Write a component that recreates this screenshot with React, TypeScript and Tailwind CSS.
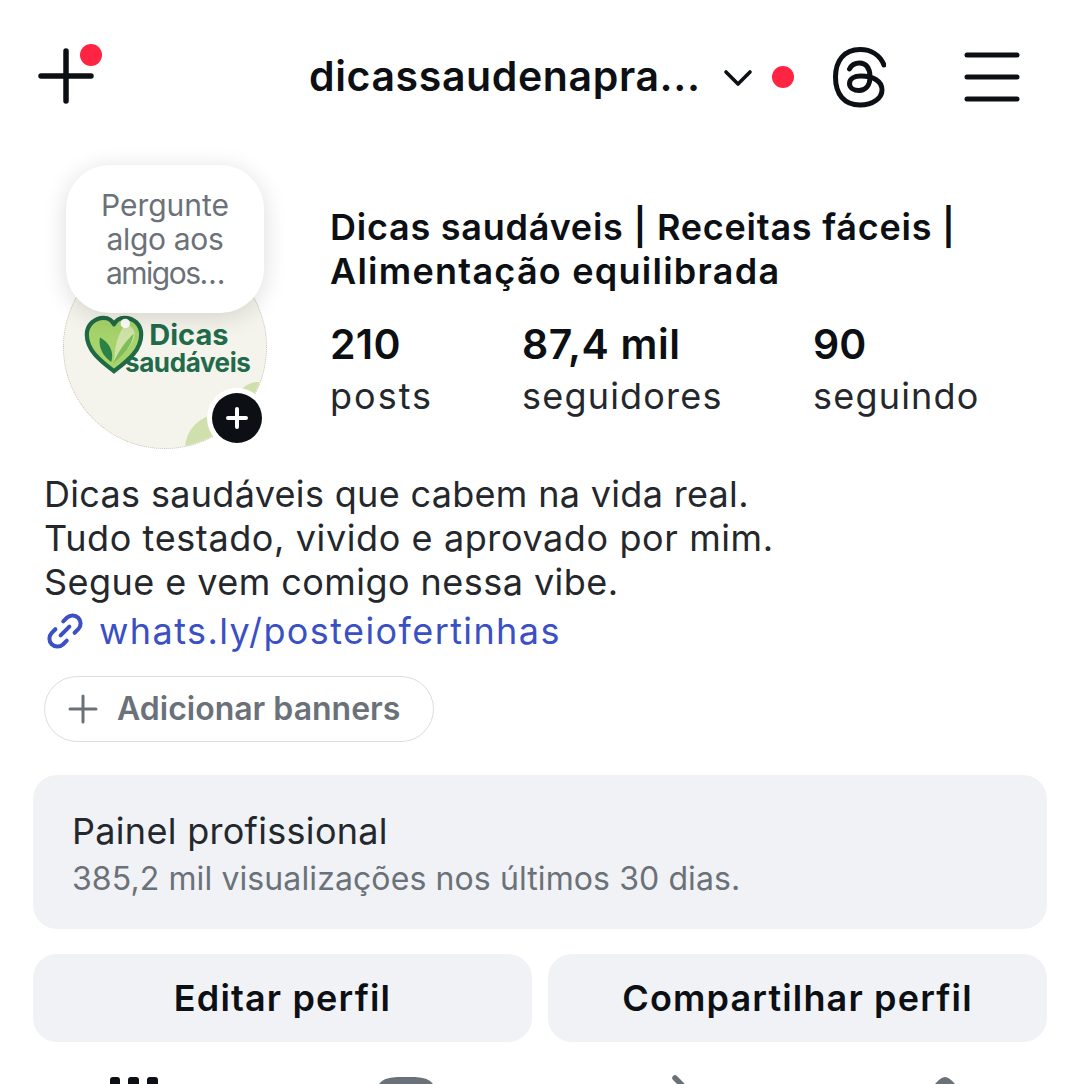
import React from "react";

const ink = "#0c1014";

function Stat({ value, label, className, valueTrack, labelTrack }: { value: string; label: string; className: string; valueTrack: string; labelTrack: string }) {
  return (
    <div className={`flex flex-col ${className}`}>
      <span className={`text-[41px] leading-[52px] font-semibold text-[#0c1014] ${valueTrack}`}>{value}</span>
      <span className={`text-[36px] leading-[52px] text-[#24282c] ${labelTrack}`}>{label}</span>
    </div>
  );
}

function Threads() {
  return (
    <svg width="53" height="61" viewBox="0 0 53 61" fill="none" stroke={ink} strokeWidth="5" strokeLinecap="round">
      <path d="M51 18C47 8 38 2.5 27 2.5C11 2.5 2.5 14 2.5 30C2.5 47 11 58 27 58C40 58 49 51 49 43C49 34 40 29 28 29C21 29 16.5 32 16.5 36.5C16.5 41 21 43.5 26 43.5C33 43.5 37 38 37 30C37 21 33 16 26.5 16C22 16 18.5 18 16.5 22" strokeLinejoin="round" />
    </svg>
  );
}

function Logo() {
  return (
    <div className="flex items-start">
      <svg width="60" height="60" viewBox="0 0 64 64" className="shrink-0">
        <path d="M32 60C18 49 3 38 3 21C3 10 12 3 21 3C26 3 30 6 32 10C34 6 38 3 43 3C53 3 61 10 61 21C61 38 46 49 32 60Z" fill="#a6d36b" stroke="#1f6a45" strokeWidth="4.5" strokeLinejoin="round" />
        <path d="M32 50C44 40 53 32 54 20C54 15 50 12 46 10C38 14 33 30 32 50Z" fill="#cfe3a8" />
        <path d="M31 52C36 40 44 28 53 20C51 34 42 42 31 52Z" fill="#7fbd5a" />
        <path d="M29 50C20 44 15 34 17 24C25 28 33 38 29 50Z" fill="#2b8146" />
        <circle cx="44" cy="9" r="5" fill="#ffffff" />
      </svg>
      <div className="flex flex-col items-end -ml-[19px] mt-[5px]">
        <span className="text-[29px] leading-[29px] font-bold text-[#216a4a] mr-[22px]">Dicas</span>
        <span className="text-[26px] leading-[27px] font-bold text-[#216a4a] tracking-[-0.4px]">saudáveis</span>
      </div>
    </div>
  );
}

function Avatar() {
  return (
    <div className="relative w-[204px] h-[284px] shrink-0">
      <div className="absolute left-0 bottom-0 w-[204px] h-[204px] rounded-full bg-[#f5f4ec] border border-dotted border-[#c4c4b8] overflow-hidden">
        <div className="absolute left-[121px] top-[168px] w-[70px] h-[70px] rounded-full bg-[#cfe0ac]" />
        <div className="absolute left-[172px] top-[136px] w-[44px] h-[44px] rounded-full bg-[#cfe0ac]" />
        <div className="absolute left-[20px] top-[69px]">
          <Logo />
        </div>
      </div>
      <div className="absolute left-[3px] top-0 w-[198px] h-[148px] rounded-[44px] bg-white shadow-[0_4px_24px_rgba(0,0,0,0.14)] flex flex-col items-center justify-center text-[#6b7178] text-[30px] leading-[34px]">
        <span>Pergunte</span>
        <span className="tracking-[-0.3px]">algo aos</span>
        <span className="tracking-[-1.5px]">amigos…</span>
      </div>
      <div className="absolute left-[144px] top-[223px] w-[60px] h-[60px] rounded-full bg-white flex items-center justify-center">
        <div className="w-[50px] h-[50px] rounded-full bg-[#0c1014] flex items-center justify-center">
          <svg width="24" height="24" viewBox="0 0 24 24" stroke="#fff" strokeWidth="4" strokeLinecap="round">
            <path d="M12 3V21M3 12H21" />
          </svg>
        </div>
      </div>
    </div>
  );
}

export default function App() {
  return (
    <div className="w-[1080px] h-[1084px] overflow-hidden bg-white font-['Inter','Noto_Sans',sans-serif]">
      <header className="h-[165px] pt-[44px] flex items-start">
        <div className="relative w-[309px] h-[60px] shrink-0">
          <svg className="absolute left-[38px] top-[4px]" width="56" height="56" viewBox="0 0 56 56" stroke={ink} strokeWidth="5.5" strokeLinecap="round">
            <path d="M28 3V53M3 28H53" />
          </svg>
          <div className="absolute left-[80px] top-0 w-[22px] h-[22px] rounded-full bg-[#ff2442]" />
        </div>
        <span className="text-[41px] leading-[64px] font-semibold tracking-[0.62px] text-[#0c1014] w-[392px] shrink-0">dicassaudenapra...</span>
        <svg className="ml-[22px] mt-[24px] shrink-0" width="30" height="20" viewBox="0 0 30 20" fill="none" stroke={ink} strokeWidth="3.6" strokeLinecap="round" strokeLinejoin="round">
          <path d="M3 4L15 16L27 4" />
        </svg>
        <div className="ml-[19px] mt-[22px] w-[22px] h-[22px] rounded-full bg-[#ff2442] shrink-0" />
        <div className="ml-[39px] mt-[3px] shrink-0"><Threads /></div>
        <svg className="ml-[78px] mt-[8px] shrink-0" width="56" height="50" viewBox="0 0 56 50" stroke={ink} strokeWidth="5" strokeLinecap="round">
          <path d="M3 3H53M3 25H53M3 47H53" />
        </svg>
      </header>

      <section className="flex pl-[63px]">
        <Avatar />
        <div className="ml-[64px] pt-[40px] flex-1">
          <p className="text-[36px] leading-[44px] font-semibold text-[#0c1014] -ml-[1px]">
            <span className="block tracking-[0.76px]">Dicas saudáveis | Receitas fáceis |</span>
            <span className="block tracking-[1.25px]">Alimentação equilibrada</span>
          </p>
          <div className="flex mt-[25px] -ml-[1px]">
            <Stat value="210" label="posts" className="w-[192px]" valueTrack="tracking-[0.3px]" labelTrack="tracking-[2px]" />
            <Stat value="87,4 mil" label="seguidores" className="w-[291px]" valueTrack="tracking-[0.6px]" labelTrack="tracking-[1.2px]" />
            <Stat value="90" label="seguindo" className="w-[170px]" valueTrack="tracking-[0px]" labelTrack="tracking-[1.2px]" />
          </div>
        </div>
      </section>

      <section className="pl-[44px] mt-[23px]">
        <p className="text-[36px] leading-[44px] text-[#24282c]">
          <span className="block tracking-[0.32px]">Dicas saudáveis que cabem na vida real.</span>
          <span className="block tracking-[0.6px]">Tudo testado, vivido e aprovado por mim.</span>
          <span className="block tracking-[0.45px]">Segue e vem comigo nessa vibe.</span>
        </p>
        <div className="flex items-center mt-[2px] h-[50px]">
          <svg width="42" height="42" viewBox="0 0 24 24" fill="none" stroke="#3a50c4" strokeWidth="2.3" strokeLinecap="round" strokeLinejoin="round" className="shrink-0">
            <path d="M9.5 14.5L14.5 9.5" />
            <path d="M11 6.5L13.2 4.3A4.6 4.6 0 0 1 19.7 10.8L17.5 13" />
            <path d="M13 17.5L10.8 19.7A4.6 4.6 0 0 1 4.3 13.2L6.5 11" />
          </svg>
          <span className="ml-[13px] text-[36px] leading-[44px] text-[#3a50c4] tracking-[1.4px]">whats.ly/posteiofertinhas</span>
        </div>
        <div className="mt-[20px] w-[390px] h-[66px] rounded-full border border-[#dbdde0] flex items-center pl-[23px]">
          <svg width="30" height="30" viewBox="0 0 30 30" stroke="#6b7178" strokeWidth="3" strokeLinecap="round" className="shrink-0">
            <path d="M15 2V28M2 15H28" />
          </svg>
          <span className="ml-[19px] text-[32px] font-semibold text-[#6b7178]">Adicionar banners</span>
        </div>
      </section>

      <section className="mx-[33px] mt-[33px] h-[154px] rounded-[24px] bg-[#f0f2f5] pl-[39px] pt-[33px]">
        <p className="text-[36px] leading-[46px] text-[#24282c] tracking-[0.3px]">Painel profissional</p>
        <p className="text-[32px] leading-[50px] text-[#6b7178] tracking-[0.1px]">385,2 mil visualizações nos últimos 30 dias.</p>
      </section>

      <div className="mx-[33px] mt-[25px] grid grid-cols-2 gap-[16px]">
        <button className="h-[88px] rounded-[24px] bg-[#f0f2f5] text-[36px] font-semibold tracking-[1.15px] text-[#0c1014]">Editar perfil</button>
        <button className="h-[88px] rounded-[24px] bg-[#f0f2f5] text-[36px] font-semibold tracking-[1.15px] text-[#0c1014]">Compartilhar perfil</button>
      </div>

      <div className="relative h-[42px]">
        <svg className="absolute left-[110px] top-[35px]" width="48" height="7" viewBox="0 0 48 7" fill={ink}>
          <path d="M0 7V3Q0 0 3 0H7Q10 0 10 3V7ZM18 7V3Q18 0 21 0H26Q29 0 29 3V7ZM37 7V3Q37 0 40 0H45Q48 0 48 3V7Z" />
        </svg>
        <svg className="absolute left-[379px] top-[35px]" width="54" height="7" viewBox="0 0 54 7" fill="#6b7178">
          <path d="M0 7Q4 0.5 18 0H36Q50 0.5 54 7Z" />
        </svg>
        <svg className="absolute left-[670px] top-[33px]" width="18" height="9" viewBox="0 0 18 9" fill="none" stroke="#6b7178" strokeWidth="5.5" strokeLinecap="round">
          <path d="M5 3L15 13" />
        </svg>
        <svg className="absolute left-[935px] top-[35px]" width="20" height="7" viewBox="0 0 20 7" fill="#6b7178">
          <path d="M0 7Q6 0 10 0Q14 0 20 7Z" />
        </svg>
      </div>
    </div>
  );
}
